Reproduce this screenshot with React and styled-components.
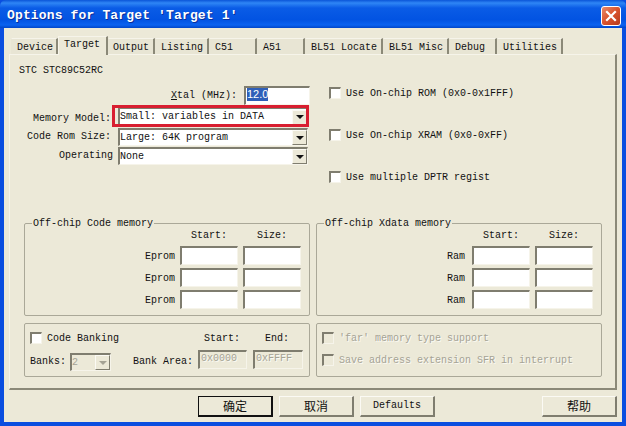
import React from "react";
import styled, { createGlobalStyle } from "styled-components";

const GlobalStyle = createGlobalStyle`
  html, body { margin: 0; padding: 0; background: #ece9d8; }
  * { box-sizing: border-box; }
`;

const TABS = [
  { label: "Device", width: 47, pad: 5 },
  { label: "Target", width: 50, pad: 5, active: true },
  { label: "Output", width: 47, pad: 4 },
  { label: "Listing", width: 54, pad: 5 },
  { label: "C51", width: 48, pad: 5 },
  { label: "A51", width: 48, pad: 5 },
  { label: "BL51 Locate", width: 78, pad: 5 },
  { label: "BL51 Misc", width: 66, pad: 5 },
  { label: "Debug", width: 48, pad: 5 },
  { label: "Utilities", width: 66, pad: 5 },
];

const Window = styled.div`
  width: 626px;
  height: 426px;
  display: flex;
  flex-direction: column;
  background: #0a4ee0;
  font-family: "Liberation Mono", monospace;
  font-size: 10px;
  line-height: 14px;
  color: #111;
`;

const TitleBar = styled.div`
  height: 28px;
  flex: none;
  display: flex;
  align-items: center;
  justify-content: space-between;
  padding: 3px 5px 0 7px;
  border-radius: 6px 6px 0 0;
  background: linear-gradient(180deg, #0a55d8 0, #2f86f5 3px, #0a5ce6 8px, #0253e2 20px, #0a62f0 25px, #0045c8 28px);
`;

const Title = styled.div`
  color: #fff;
  font-size: 13px;
  font-weight: bold;
  letter-spacing: 0.15px;
  text-shadow: 1px 1px 0 #0a2f9a;
`;

const CloseButton = styled.div`
  width: 20px;
  height: 20px;
  display: flex;
  align-items: center;
  justify-content: center;
  border: 1px solid #fff;
  border-radius: 3px;
  background: linear-gradient(135deg, #e88a6a 0, #d9522c 50%, #b53a1c 100%);
`;

const Client = styled.div`
  flex: 1;
  min-height: 0;
  margin: 0 4px 4px 4px;
  display: flex;
  flex-direction: column;
  background: #ece9d8;
`;

const TabRow = styled.div`
  height: 26px;
  flex: none;
  margin-left: 7px;
  display: flex;
  align-items: flex-end;
`;

const Tab = styled.div`
  position: relative;
  z-index: ${(p) => (p.$active ? 1 : 0)};
  width: ${(p) => p.$width}px;
  height: ${(p) => (p.$active ? 19 : 16)}px;
  margin-bottom: ${(p) => (p.$active ? -1 : 0)}px;
  padding: ${(p) => (p.$active ? 1 : 2)}px 0 0 ${(p) => p.$pad}px;
  white-space: nowrap;
  background: ${(p) => (p.$active ? "#ece9d8" : "#e8e5d4")};
  border-top: 1px solid #f6f4ea;
  border-left: 1px solid ${(p) => (p.$active ? "#f6f4ea" : "transparent")};
  border-right: 2px solid #8b8978;
`;

const Panel = styled.div`
  width: 608px;
  height: 336px;
  flex: none;
  margin-left: 5px;
  padding: 9px 0 0 14px;
  border-top: 1px solid #f6f4ea;
  border-left: 1px solid #f6f4ea;
  border-right: 2px solid #8b8978;
  border-bottom: 2px solid #8b8978;
`;

const ChipName = styled.div`
  height: 12px;
  margin: 0 0 10px -5px;
`;

const Columns = styled.div`
  display: grid;
  grid-template-columns: 286px 286px;
  column-gap: 6px;
`;

const TopSection = styled(Columns)`
  height: 137px;
`;

const BottomSection = styled(Columns)`
  margin-top: 7px;
`;

const FormColumn = styled.div`
  display: flex;
  flex-direction: column;
  gap: 2px;
`;

const XtalRow = styled.div`
  display: flex;
  justify-content: flex-end;
  align-items: center;
  gap: 7px;
  height: 19px;
`;

const FormRow = styled.div`
  display: grid;
  grid-template-columns: 94px 190px;
  align-items: center;
  margin-top: ${(p) => p.$shift ?? 0}px;
`;

const FormLabel = styled.div`
  text-align: right;
  padding-right: ${(p) => p.$pad ?? 7}px;
  margin-top: ${(p) => p.$top ?? 0}px;
  white-space: nowrap;
`;

const Underline = styled.span`
  text-decoration: underline;
`;

const Sunken = styled.div`
  border-top: 2px solid #7f7d6f;
  border-left: 2px solid #7f7d6f;
  border-right: 1px solid #f6f4ea;
  border-bottom: 1px solid #f6f4ea;
  background: ${(p) => (p.$disabled ? "#ece9d8" : "#fff")};
`;

const TextBox = styled(Sunken)`
  width: ${(p) => p.$width}px;
  height: 19px;
  padding-left: 1px;
  font-family: "Liberation Sans", sans-serif;
  font-size: 11px;
  line-height: 13px;
  color: ${(p) => (p.$disabled ? "#a5a395" : "#111")};
  ${(p) => p.$disabled && `font-family: "Liberation Mono", monospace; font-size: 10px; line-height: 14px; text-shadow: 1px 1px 0 #fbfaf4;`}
`;

const Selection = styled.span`
  display: inline-block;
  background: #2f5fb8;
  color: #fff;
`;

const ComboBox = styled(Sunken)`
  position: relative;
  width: ${(p) => p.$width}px;
  height: ${(p) => p.$height ?? 18}px;
  display: flex;
  align-items: center;
  justify-content: space-between;
  color: ${(p) => (p.$disabled ? "#a5a395" : "#111")};
`;

const ComboArrow = styled.div`
  width: 15px;
  height: 15px;
  flex: none;
  display: flex;
  align-items: center;
  justify-content: center;
  background: #ece9d8;
  border-top: 1px solid #fbfaf4;
  border-left: 1px solid #fbfaf4;
  border-right: 1px solid #7f7d6f;
  border-bottom: 1px solid #7f7d6f;

  &::after {
    content: "";
    border-left: 4px solid transparent;
    border-right: 4px solid transparent;
    border-top: 4px solid ${(p) => (p.$disabled ? "#a5a395" : "#111")};
  }
`;

const Highlight = styled.div`
  position: absolute;
  left: -8px;
  top: -4px;
  right: -2px;
  bottom: -2px;
  border: 3px solid #d81e30;
  pointer-events: none;
`;

const CheckColumn = styled.div`
  display: flex;
  flex-direction: column;
  gap: 30px;
  padding: 1px 0 0 13px;
`;

const CheckRow = styled.div`
  display: flex;
  align-items: flex-start;
  gap: 5px;
  height: 12px;
  white-space: nowrap;
  color: ${(p) => (p.$disabled ? "#a5a395" : "inherit")};
  ${(p) => p.$disabled && "text-shadow: 1px 1px 0 #fbfaf4;"}
`;

const CheckBox = styled(Sunken)`
  width: 12px;
  height: 12px;
  flex: none;
`;

const GroupBox = styled.div`
  position: relative;
  height: ${(p) => p.$height}px;
  border: 1px solid #aaa898;
  border-radius: 2px;
`;

const Legend = styled.div`
  position: absolute;
  left: 7px;
  top: -7px;
  padding: 0 1px;
  background: #ece9d8;
  white-space: nowrap;
`;

const MemoryGrid = styled.div`
  display: grid;
  grid-template-columns: 1fr 58px 58px;
  column-gap: 5px;
  row-gap: 3px;
  padding: 5px 8px 0 0;
`;

const ColumnTitle = styled.div`
  height: 14px;
  text-align: center;
`;

const RowLabel = styled.div`
  height: 19px;
  text-align: right;
  line-height: 21px;
  padding-right: ${(p) => p.$pad ?? 0}px;
`;

const BankingGrid = styled.div`
  display: grid;
  grid-template-columns: 103px 65px 55px 50px;
  grid-template-rows: 12px 19px;
  row-gap: 6px;
  align-items: start;
  padding: 8px 0 0 5px;
`;

const BanksCell = styled.div`
  display: flex;
  align-items: center;
  gap: 4px;
  margin-top: 3px;
`;

const BankAreaLabel = styled.div`
  padding-top: 5px;
`;

const BankTitle = styled.div`
  padding-left: ${(p) => p.$pad}px;
`;

const FarColumn = styled.div`
  display: flex;
  flex-direction: column;
  gap: 10px;
  padding: 8px 0 0 5px;
`;

const Footer = styled.div`
  flex: 1;
  display: flex;
  gap: 6px;
  padding: 6px 5px 0 194px;
`;

const Button = styled.div`
  width: 75px;
  height: 21px;
  margin-left: ${(p) => (p.$push ? "auto" : "0")};
  display: flex;
  align-items: center;
  justify-content: center;
  background: #ece9d8;
  font-family: ${(p) => (p.$cjk ? '"Noto Sans CJK SC", sans-serif' : '"Liberation Mono", monospace')};
  font-size: ${(p) => (p.$cjk ? 12 : 10)}px;
  border-top: 1px solid ${(p) => (p.$primary ? "#111" : "#fbfaf4")};
  border-left: 1px solid ${(p) => (p.$primary ? "#111" : "#fbfaf4")};
  border-right: 2px solid ${(p) => (p.$primary ? "#111" : "#7f7d6f")};
  border-bottom: 2px solid ${(p) => (p.$primary ? "#111" : "#7f7d6f")};
`;

const MemoryGroup = ({ title, label, pad }) => (
  <GroupBox $height={93}>
    <Legend>{title}</Legend>
    <MemoryGrid>
      <span />
      <ColumnTitle>Start:</ColumnTitle>
      <ColumnTitle>Size:</ColumnTitle>
      {[0, 1, 2].map((i) => (
        <React.Fragment key={i}>
          <RowLabel $pad={pad}>{label}</RowLabel>
          <TextBox $width={58} />
          <TextBox $width={58} />
        </React.Fragment>
      ))}
    </MemoryGrid>
  </GroupBox>
);

export default function App() {
  return (
    <>
      <GlobalStyle />
      <Window>
        <TitleBar>
          <Title>Options for Target 'Target 1'</Title>
          <CloseButton>
            <svg width="12" height="12" viewBox="0 0 12 12">
              <path d="M2 2 L10 10 M10 2 L2 10" stroke="#fff" strokeWidth="2.2" strokeLinecap="square" />
            </svg>
          </CloseButton>
        </TitleBar>
        <Client>
          <TabRow>
            {TABS.map((t) => (
              <Tab key={t.label} $width={t.width} $pad={t.pad} $active={t.active}>
                {t.label}
              </Tab>
            ))}
          </TabRow>
          <Panel>
            <ChipName>STC STC89C52RC</ChipName>
            <TopSection>
              <FormColumn>
                <XtalRow>
                  <div>
                    <Underline>X</Underline>tal (MHz):
                  </div>
                  <TextBox $width={66}>
                    <Selection>12.0</Selection>
                  </TextBox>
                </XtalRow>
                <FormRow>
                  <FormLabel $top={5}>Memory Model:</FormLabel>
                  <ComboBox $width={190} $height={19}>
                    Small: variables in DATA
                    <ComboArrow />
                    <Highlight />
                  </ComboBox>
                </FormRow>
                <FormRow>
                  <FormLabel>Code Rom Size:</FormLabel>
                  <ComboBox $width={190}>
                    Large: 64K program
                    <ComboArrow />
                  </ComboBox>
                </FormRow>
                <FormRow $shift={-1}>
                  <FormLabel $pad={5}>Operating</FormLabel>
                  <ComboBox $width={190}>
                    None
                    <ComboArrow />
                  </ComboBox>
                </FormRow>
              </FormColumn>
              <CheckColumn>
                <CheckRow>
                  <CheckBox />
                  Use On-chip ROM (0x0-0x1FFF)
                </CheckRow>
                <CheckRow>
                  <CheckBox />
                  Use On-chip XRAM (0x0-0xFF)
                </CheckRow>
                <CheckRow>
                  <CheckBox />
                  Use multiple DPTR regist
                </CheckRow>
              </CheckColumn>
            </TopSection>
            <Columns>
              <MemoryGroup title="Off-chip Code memory" label="Eprom" />
              <MemoryGroup title="Off-chip Xdata memory" label="Ram" pad={2} />
            </Columns>
            <BottomSection>
              <GroupBox $height={54}>
                <BankingGrid>
                  <CheckRow>
                    <CheckBox />
                    Code Banking
                  </CheckRow>
                  <span />
                  <BankTitle $pad={6}>Start:</BankTitle>
                  <BankTitle $pad={12}>End:</BankTitle>
                  <BanksCell>
                    Banks:
                    <ComboBox $width={41} $disabled>
                      2
                      <ComboArrow $disabled />
                    </ComboBox>
                  </BanksCell>
                  <BankAreaLabel>Bank Area:</BankAreaLabel>
                  <TextBox $width={49} $disabled>
                    0x0000
                  </TextBox>
                  <TextBox $width={50} $disabled>
                    0xFFFF
                  </TextBox>
                </BankingGrid>
              </GroupBox>
              <GroupBox $height={54}>
                <FarColumn>
                  <CheckRow $disabled>
                    <CheckBox $disabled />
                    'far' memory type support
                  </CheckRow>
                  <CheckRow $disabled>
                    <CheckBox $disabled />
                    Save address extension SFR in interrupt
                  </CheckRow>
                </FarColumn>
              </GroupBox>
            </BottomSection>
          </Panel>
          <Footer>
            <Button $primary $cjk>
              确定
            </Button>
            <Button $cjk>取消</Button>
            <Button>Defaults</Button>
            <Button $cjk $push>
              帮助
            </Button>
          </Footer>
        </Client>
      </Window>
    </>
  );
}
